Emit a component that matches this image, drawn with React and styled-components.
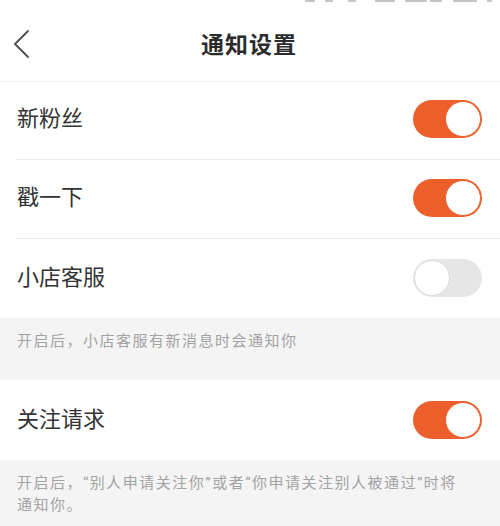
import React from "react";
import styled, { createGlobalStyle } from "styled-components";

const Global = createGlobalStyle`
  html, body { margin: 0; padding: 0; background: #ffffff; }
  body { font-family: Roboto, "Noto Sans CJK SC", sans-serif; }
`;

const ORANGE = "#ec5f2b";

const Page = styled.div`
  width: 500px;
  height: 526px;
  overflow: hidden;
  background: #fff;
  display: flex;
  flex-direction: column;
`;

const StatusStrip = styled.div`
  height: 2px;
  display: flex;
  justify-content: flex-end;
  align-items: flex-start;
  padding-right: 8px;
  flex: none;
`;

const StatusBit = styled.span`
  display: block;
  height: 2px;
  background: #c4c4c4;
  border-radius: 0 0 1px 1px;
`;

const Header = styled.header`
  height: 79px;
  border-bottom: 1px solid #efefef;
  display: grid;
  grid-template-columns: 60px 1fr 60px;
  align-items: center;
  flex: none;
`;

const BackButton = styled.div`
  display: flex;
  align-items: center;
  padding-left: 12px;
  height: 100%;
  padding-top: 4px;
  box-sizing: border-box;
`;

const Title = styled.h1`
  margin: 0;
  text-align: center;
  font-family: Roboto, "Noto Sans CJK SC", sans-serif;
  font-size: 23px;
  font-weight: 700;
  letter-spacing: 1px;
  color: #2b2b2b;
  padding-top: 3px;
  padding-right: 2px;
`;

const Group = styled.div`
  background: #fff;
  padding-left: 16px;
`;

const Row = styled.div`
  height: ${(p) => p.$h}px;
  box-sizing: border-box;
  display: flex;
  align-items: center;
  justify-content: space-between;
  padding-right: 18px;
  padding-bottom: ${(p) => p.$lift || 0}px;
  border-bottom: ${(p) => (p.$divider ? "1px solid #ececec" : "none")};
`;

const Label = styled.span`
  font-family: Roboto, "Noto Sans CJK SC", sans-serif;
  font-size: 22px;
  letter-spacing: 0;
  color: #333;
  padding-left: 1px;
  padding-bottom: 6px;
`;

const Toggle = styled.div`
  width: 69px;
  height: 38px;
  border-radius: 19px;
  box-sizing: border-box;
  background: ${(p) => (p.$on ? ORANGE : "#e6e6e6")};
  display: flex;
  align-items: center;
  justify-content: ${(p) => (p.$on ? "flex-end" : "flex-start")};
  padding: 1px;
`;

const Knob = styled.div`
  width: 36px;
  height: 36px;
  border-radius: 50%;
  background: #fff;
  box-sizing: border-box;
  border: 1.5px solid ${(p) => (p.$on ? ORANGE : "#dcdcdc")};
`;

const Note = styled.div`
  background: #f4f4f4;
  height: ${(p) => p.$h}px;
  box-sizing: border-box;
  padding: ${(p) => p.$pt}px 34px 0 17px;
  font-family: Roboto, "Noto Sans CJK SC", sans-serif;
  font-size: 15px;
  letter-spacing: 1.5px;
  line-height: 22px;
  color: #a3a3a3;
`;

const Fill = styled.div`
  flex: 1;
  background: #f4f4f4;
`;

const Switch = ({ on }) => (
  <Toggle $on={on}>
    <Knob $on={on} />
  </Toggle>
);

const bits = [
  [10, 10],
  [8, 15],
  [8, 19],
  [20, 10],
  [22, 3],
  [12, 11],
  [24, 10],
  [5, 0],
];

export default function App() {
  return (
    <Page>
      <Global />
      <StatusStrip>
        {bits.map(([w, m], i) => (
          <StatusBit key={i} style={{ width: w, marginRight: m }} />
        ))}
      </StatusStrip>
      <Header>
        <BackButton>
          <svg width="20" height="30" viewBox="0 0 20 30">
            <path d="M16 2 L3 15 L16 28" fill="none" stroke="#555" strokeWidth="2" strokeLinecap="round" strokeLinejoin="round" />
          </svg>
        </BackButton>
        <Title>通知设置</Title>
        <div />
      </Header>
      <Group>
        <Row $h={78} $lift={4} $divider>
          <Label>新粉丝</Label>
          <Switch on />
        </Row>
        <Row $h={79} $lift={3} $divider>
          <Label>戳一下</Label>
          <Switch on />
        </Row>
        <Row $h={79} $lift={2}>
          <Label>小店客服</Label>
          <Switch on={false} />
        </Row>
      </Group>
      <Note $h={62} $pt={12}>开启后，小店客服有新消息时会通知你</Note>
      <Group>
        <Row $h={80} $lift={0}>
          <Label>关注请求</Label>
          <Switch on />
        </Row>
      </Group>
      <Note $h={66} $pt={12}>开启后，“别人申请关注你”或者“你申请关注别人被通过”时将通知你。</Note>
      <Fill />
    </Page>
  );
}
